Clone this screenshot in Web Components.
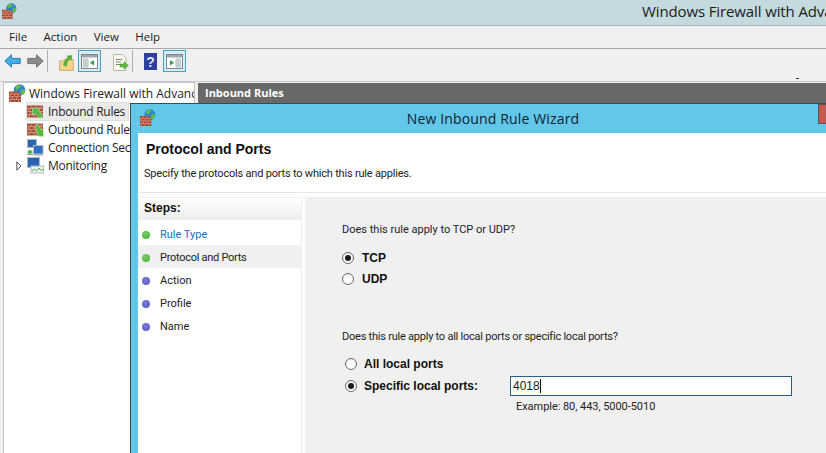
<!DOCTYPE html>
<html><head><meta charset="utf-8">
<style>
html,body{margin:0;padding:0;background:#f0f0f0}
body{width:826px;height:453px;overflow:hidden;position:relative;font-family:"Open Sans","Noto Sans",sans-serif}
</style></head><body>
<script>
function def(name,css,html){
  customElements.define(name,class extends HTMLElement{
    constructor(){super();const s=this.attachShadow({mode:'open'});
      s.innerHTML=`<style>${css}</style>${html}`;}
  });
}
const FW=(w=17,h=18)=>`<svg width="${w}" height="${h}" viewBox="0 0 17 18" style="display:block">
<circle cx="10.500" cy="6" r="5.800" fill="#2c86cc"/>
<path d="M7.500 1.400c2-1 4.500-.6 4.500.8s-2 1.200-2.600 2.600-2.600.8-2.800-.8.200-2 .900-2.600zM12.500 5.500c1.500-.8 3.400.2 3.700 1.400-.3 2-1.800 3.800-3.500 4.200-1-1.500-1.200-4.200-.2-5.600z" fill="#63bd4d"/>
<path d="M0 7.500h8.500l3.500 3V18H0z" fill="#a5452f"/>
<path d="M0 10h11.500M0 12.700h12M0 15.400h12M3 7.500V10M7 7.500V10M1.500 10v2.700M5.500 10v2.700M9.500 10v2.700M3.500 12.700v2.700M7.500 12.700v2.700M1.500 15.400V18M5.500 15.400V18M9.500 15.400V18" stroke="#dba990" stroke-width=".7" fill="none"/></svg>`;

def('title-bar',`:host{display:flex;flex:none;box-sizing:border-box;height:26px;align-items:flex-start;background:#c5dade;border-bottom:1px solid #a9b8bf;position:relative;overflow:hidden}
.i{margin:3px 0 0 2px}.t{position:absolute;left:642px;top:0;white-space:nowrap;font:15px/22px "Open Sans",sans-serif;letter-spacing:-.12px;color:#1b1b1b}`,
`<div class="i">${FW(15,16)}</div><div class="t">Windows Firewall with Advanced Security</div>`);

def('menu-bar',`:host{display:flex;flex:none;height:23px;box-sizing:border-box;padding:0 0 1px 9px;align-items:center;background:#f0f0f0;border-bottom:1px solid #a8a8a8;font:11.5px "Open Sans",sans-serif;color:#1c1c1c}
span{margin-right:16.4px}`,
`<span>File</span><span>Action</span><span>View</span><span>Help</span>`);

def('tool-bar',`:host{display:flex;flex:none;height:33px;box-sizing:border-box;align-items:flex-start;background:linear-gradient(#f0f0f0 80%,#ecf0f7);padding:1px 0 0 0;border-bottom:1px solid #c8ccd2;position:relative}
.b{height:22px;display:flex;align-items:center;justify-content:center;flex:none;box-sizing:border-box}
.on{background:#dcecf6;border:1.500px solid #3fa5c8;width:23px}
.sep{width:1px;height:22px;background:#aeaeae;flex:none}
svg{display:block}
.dash{position:absolute;left:796px;top:29px;width:3px;height:1px;background:#333}`,
`<div class="b" style="width:17px;margin-left:4px"><svg width="17" height="14" viewBox="0 0 17 14"><path d="M7.500.8L.8 7l6.700 6.200V9.600h8.700V4.400H7.500z" fill="#45aee8" stroke="#2372ad" stroke-width=".9"/></svg></div>
<div class="b" style="width:17px;margin-left:6px"><svg width="17" height="14" viewBox="0 0 17 14"><path d="M9.500.8L16.200 7l-6.700 6.200V9.600H.8V4.400h8.700z" fill="#8a8a8a" stroke="#6a6a6a" stroke-width=".9"/></svg></div>
<div class="sep" style="margin-left:3px"></div>
<div class="b" style="margin-left:11px;width:15px"><svg width="15" height="16" viewBox="0 0 15 16" style="margin-top:4px"><path d="M.6 6h3.400l1-1.300h9.400v10.700H.6z" fill="#f5d689" stroke="#b99a52" stroke-width=".7"/><path d="M4.500 10C5 6 7 3.800 9 2.700L8 .9l5-.4-.7 4.800-1.400-1.600C9.500 5 7.800 7 7.400 11.500z" fill="#5bb13a" stroke="#3b8a25" stroke-width=".4"/></svg></div>
<div class="b on" style="margin-left:4px"><svg width="17" height="15" viewBox="0 0 17 15"><rect x=".5" y=".5" width="16" height="14" fill="#fff" stroke="#7c8a8e"/><rect x="1" y="1" width="15" height="2.500" fill="#9aa8ac"/><rect x="2.500" y="5" width="4.500" height="8" fill="#dfe6e8" stroke="#8ea0a4" stroke-width=".6"/><path d="M3.700 7h2M3.700 9h2M3.700 11h2" stroke="#7c8a8e" stroke-width=".7"/><path d="M13 6v5.500L9 8.700z" fill="#2c9a44"/></svg></div>
<div class="b" style="margin-left:11px;width:17px"><svg width="17" height="17" viewBox="0 0 17 17" style="margin-top:3px"><path d="M1.500.5h9l3.500 3.500v12.500H1.500z" fill="#fbfbef" stroke="#a9a98e" stroke-width=".8"/><path d="M4 5.500h6M4 8h5M4 10.500h4" stroke="#555" stroke-width="1" stroke-dasharray="1.500 .7"/><path d="M8 10h4V7.800l4.500 3.700-4.500 3.700V13H8z" fill="#61b93f" stroke="#3f8e2a" stroke-width=".5"/></svg></div>
<div class="sep" style="margin-left:3px"></div>
<div class="b" style="margin-left:11px;width:13px"><svg width="13" height="17" viewBox="0 0 13 17"><rect width="13" height="17" fill="#2d3f9f"/><text x="6.500" y="13.500" font-family="Liberation Sans" font-size="14" font-weight="700" text-anchor="middle" fill="#dfe6ff">?</text></svg></div>
<div class="b on" style="margin-left:6px"><svg width="17" height="15" viewBox="0 0 17 15"><rect x=".5" y=".5" width="16" height="14" fill="#fff" stroke="#7c8a8e"/><rect x="1" y="1" width="15" height="2.500" fill="#9aa8ac"/><rect x="10" y="5" width="4.500" height="8" fill="#dfe6e8" stroke="#8ea0a4" stroke-width=".6"/><path d="M11.200 7h2M11.200 9h2M11.200 11h2" stroke="#7c8a8e" stroke-width=".7"/><path d="M4 6v5.500l4-2.800z" fill="#2c9a44"/></svg></div>
<div class="dash"></div>`);

const wall=(arrow)=>`<svg width="17" height="17" viewBox="0 0 17 17" style="display:block"><rect x="0" y="2.500" width="16" height="12" fill="#a8503a"/><path d="M0 5.500h16M0 8.500h16M0 11.500h16M4 2.500v3M9 2.500v3M14 2.500v3M2 5.500v3M7 5.500v3M12 5.500v3M4 8.500v3M9 8.500v3M14 8.500v3M2 11.500v3M7 11.500v3M12 11.500v3" stroke="#dcae98" stroke-width=".7" fill="none"/>${arrow}</svg>`;
const inArrow=`<path d="M5.500 5h7.500l-2.200 2 5.200 5.500-3 3-5.400-5.500-2.100 2.300z" fill="#55bb3c" stroke="#dff3d4" stroke-width=".5"/>`;
const outArrow=`<path d="M8 5.500l3-2.500 3.500 6 2-1.500v8.300l-8-1 2.300-1.500z" fill="#55bb3c" stroke="#dff3d4" stroke-width=".5"/>`;
const pcs=`<svg width="17" height="17" viewBox="0 0 17 17" style="display:block"><rect x=".5" y=".5" width="9" height="8" fill="#2b63b4" stroke="#aeb9c2"/><rect x="6.500" y="6.500" width="9.500" height="8.500" fill="#2f6fc8" stroke="#aeb9c2"/><path d="M0 13l3-2.500 3 2.500-3 2.500z" fill="#55b04a"/><path d="M0 15.500h6M7 16h9" stroke="#8a98a2"/></svg>`;
const mon=`<svg width="17" height="17" viewBox="0 0 17 17" style="display:block"><rect x=".5" y=".5" width="12" height="10" fill="#2b63b4" stroke="#aeb9c2"/><rect x="4" y="9" width="12.500" height="7" fill="#eef2f4" stroke="#aeb9c2"/><path d="M5 14l2.500-2 2 2 2.500-3 2 2.500 2-1.500" stroke="#4fb43a" fill="none"/></svg>`;

def('tree-row',`:host{display:flex;align-items:center;height:18px;white-space:nowrap;font:12px "Open Sans",sans-serif;color:#1d1d1d;letter-spacing:var(--ls,0)}
:host([sel]) .l{background:#eaeaea;box-shadow:0 0 0 1px #e0e0e0}
.l{display:flex;align-items:center;gap:var(--g,4px);height:17px;width:max-content;padding-right:3px}`,
`<div class="l"><slot name="i"></slot><slot></slot></div>`);

def('tree-pane',`:host{display:block;width:192px;flex:none;box-sizing:border-box;background:#fff;border:1px solid #c4c4c4;border-width:1px 1px 0 1px;margin-left:3px;overflow:hidden;padding:1px 0 0 5px;position:relative}
.k{padding-left:18px;--ls:-.28px;--g:4px}.top{height:18px;--g:3px}
.exp{position:absolute;left:12px;top:78px}`,
`<div class="top"><tree-row><span slot="i">${FW(17,18)}</span>Windows Firewall with Advanced Security</tree-row></div>
<div class="k"><tree-row sel><span slot="i">${wall(inArrow)}</span>Inbound Rules</tree-row>
<tree-row><span slot="i">${wall(outArrow)}</span>Outbound Rules</tree-row>
<tree-row><span slot="i">${pcs}</span>Connection Security Rules</tree-row>
<tree-row><span slot="i">${mon}</span>Monitoring</tree-row></div>
<svg class="exp" width="6" height="10" viewBox="0 0 6 10"><path d="M.8.8L5 5 .8 9.200z" fill="#fff" stroke="#555"/></svg>`);

def('main-head',`:host{display:block;flex:1;margin:1px 0 0 3px;height:20px;box-sizing:border-box;background:#696969;color:#fff;font:700 11px/20px "Open Sans",sans-serif;padding-left:7px;white-space:nowrap}`,`<slot></slot>`);

def('step-item',`:host{display:flex;box-sizing:border-box;height:23px;align-items:center;padding:2px 0 0 4px;gap:10px;font:11px Roboto,sans-serif;color:#222}
:host([cur]){background:#f0f0f0;letter-spacing:-.28px}:host([done]){color:#1a6fc0}
i{width:8px;height:8px;border-radius:50%;background:radial-gradient(circle at 40% 35%,#7b78d8,#5b57b8);flex:none}
:host([g]) i{background:radial-gradient(circle at 40% 35%,#70d060,#4aae3c)}`,`<i></i><slot></slot>`);

def('radio-opt',`:host{display:flex;align-items:center;gap:var(--gap,8px);font:700 12px "Liberation Sans",Arial,sans-serif;color:#111;height:21px;white-space:nowrap}
b{width:12px;height:12px;border-radius:50%;box-sizing:border-box;border:1px solid #6a6a6a;background:linear-gradient(#f4f4f4,#fff);display:flex;align-items:center;justify-content:center;flex:none;font-size:0}
:host([on]) b::after{content:"";width:6px;height:6px;border-radius:50%;background:#1a1a1a}`,`<b></b><slot></slot>`);

def('wizard-window',`:host{display:block;position:absolute;left:130px;top:103px;width:710px;height:360px;background:#62c7e8;border:1px solid #3b4a50;border-width:1px 0 0 1px;box-sizing:border-box}
.tb{height:29px;position:relative;display:flex;align-items:center;justify-content:center;font:14px "Open Sans",sans-serif;letter-spacing:.15px;color:#123;padding-left:28px;box-sizing:border-box;width:696px}
.ic{position:absolute;left:9px;top:5px}
.x{position:absolute;left:687px;top:0;width:30px;height:20px;background:#c45a4e;border:1px solid #555;box-sizing:border-box}
.cl{margin-left:7px;background:#fff;height:330px}
.h{height:60px;box-sizing:border-box;padding:6px 0 0 8px;border-bottom:1px solid #e8e8e8}
h1{margin:0;font:700 14px/20px "Liberation Sans",Arial,sans-serif;color:#111}
p{margin:7px 0 0 -2px;font:11px/15px Roboto,sans-serif;letter-spacing:-.2px;color:#222}
.bd{display:flex;height:270px;padding-top:4px;box-sizing:border-box}
.st{width:164px;flex:none;border:1px solid #eee;border-width:1px 1px 0 0;box-sizing:border-box}
.sh{height:22px;background:linear-gradient(#fff,#ededed);font:700 12px/21px "Liberation Sans",Arial,sans-serif;padding-left:6px;color:#111;margin-bottom:2px}
.pn{flex:1;background:#f0f0f0;margin-left:3px;padding:25px 0 0 37px;font:11px/15px Roboto,sans-serif;color:#222;box-sizing:border-box}
.q{height:15px}
.g1{margin-top:10px}
.q2{margin-top:40px;letter-spacing:-.23px}
.g2{margin:9px 0 0 3px;--gap:7px}
.row{display:flex;align-items:center;height:21px;margin-top:1px}
.row radio-opt{width:165px;flex:none}
.inp{width:282px;height:20px;box-sizing:border-box;border:1px solid #2c5f7c;background:#fff;font:12px/18px "Liberation Sans",Arial,sans-serif;padding-left:2px;color:#222;display:flex;align-items:center}
.inp::after{content:"";width:1px;height:14px;background:#111}
.ex{margin:3px 0 0 171px;letter-spacing:-.05px}`,
`<div class="tb"><span class="ic">${FW(16,17)}</span><span>New Inbound Rule Wizard</span><span class="x"></span></div>
<div class="cl"><div class="h"><h1>Protocol and Ports</h1><p>Specify the protocols and ports to which this rule applies.</p></div>
<div class="bd"><div class="st"><div class="sh">Steps:</div>
<step-item g done>Rule Type</step-item><step-item g cur>Protocol and Ports</step-item><step-item>Action</step-item><step-item>Profile</step-item><step-item>Name</step-item></div>
<div class="pn"><div class="q">Does this rule apply to TCP or UDP?</div>
<div class="g1"><radio-opt on>TCP</radio-opt><radio-opt>UDP</radio-opt></div>
<div class="q q2">Does this rule apply to all local ports or specific local ports?</div>
<div class="g2"><radio-opt>All local ports</radio-opt>
<div class="row"><radio-opt on>Specific local ports:</radio-opt><div class="inp">4018</div></div>
<div class="ex">Example: 80, 443, 5000-5010</div></div>
</div></div></div>`);

def('app-shell',`:host{display:flex;flex-direction:column;width:826px;height:453px;overflow:hidden;position:relative;background:#f0f0f0}
.body{display:flex;flex:1;min-height:0}`,
`<title-bar></title-bar><menu-bar></menu-bar><tool-bar></tool-bar>
<div class="body"><tree-pane></tree-pane><main-head>Inbound Rules</main-head></div><wizard-window></wizard-window>`);
</script>
<app-shell></app-shell>
</body></html>
